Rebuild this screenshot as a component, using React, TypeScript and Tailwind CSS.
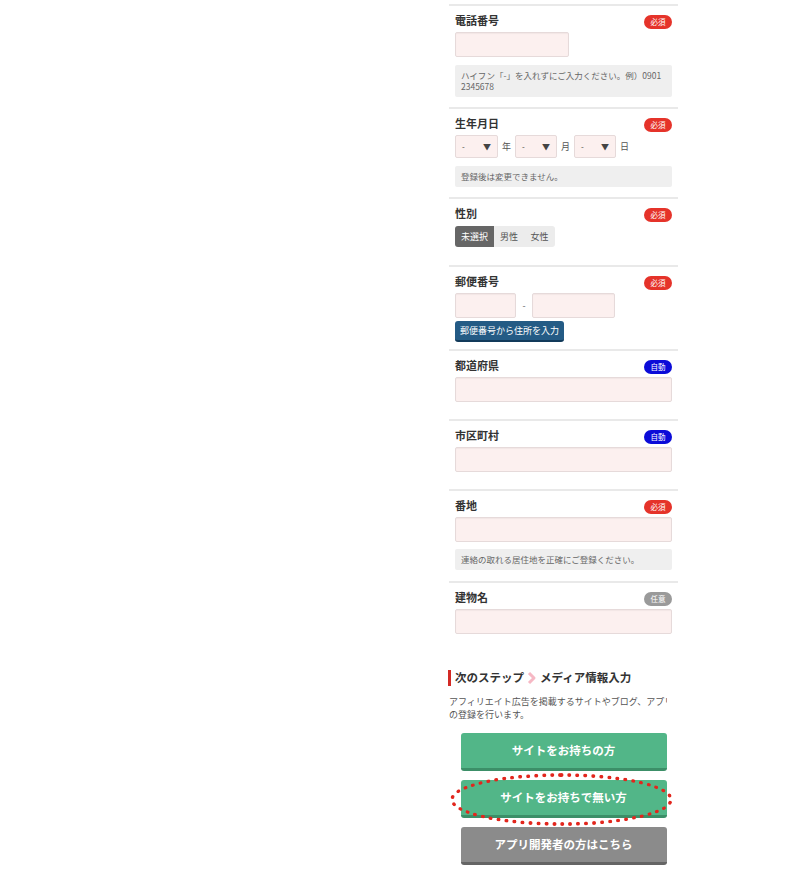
import React from "react";

const font = { fontFamily: '"Noto Sans CJK JP", "Noto Sans", sans-serif' };

const Sep = () => <div className="h-[2px] bg-[#e9e9e9]" />;

function Badge({ kind }: { kind: "req" | "auto" | "opt" }) {
  const cls =
    kind === "req"
      ? "bg-[#e5332a]"
      : kind === "auto"
      ? "bg-[#0b0bd8]"
      : "bg-[#9a9a9a]";
  const text = kind === "req" ? "必須" : kind === "auto" ? "自動" : "任意";
  return (
    <span
      className={`${cls} mt-[2px] flex h-[14px] w-[28px] items-center justify-center rounded-full text-[7.5px] leading-none text-white`}
    >
      {text}
    </span>
  );
}

function Header({ label, kind }: { label: string; kind: "req" | "auto" | "opt" }) {
  return (
    <div className="flex h-[19px] items-start justify-between">
      <span className="text-[11px] font-bold leading-[14px] text-[#333]">{label}</span>
      <Badge kind={kind} />
    </div>
  );
}

const inputCls =
  "h-[25px] rounded-[2px] border border-[#e6dada] bg-[#fcf0ef] shadow-[inset_0_1px_1px_rgba(0,0,0,0.04)]";

function Note({ children }: { children: React.ReactNode }) {
  return (
    <div className="rounded-[2px] bg-[#efefef] px-[6px] py-[5px] text-[8.5px] leading-[11px] text-[#666]">
      {children}
    </div>
  );
}

function Select({ w }: { w: string }) {
  return (
    <div
      className={`${w} flex h-[23px] items-center justify-between rounded-[2px] border border-[#e6dada] bg-[#fcf0ef] px-[6px] text-[8px] text-[#444]`}
    >
      <span>-</span>
      <span className="text-[8px]">▼</span>
    </div>
  );
}

export default function App() {
  return (
    <div className="min-h-[873px] w-[800px] bg-white pt-[4px]" style={font}>
      <div className="ml-[449px] w-[229px]">
        {/* 電話番号 */}
        <Sep />
        <div className="px-[6px] pb-[10px] pt-[7px]">
          <Header label="電話番号" kind="req" />
          <div className={`${inputCls} w-[114px]`} />
          <div className="mt-[8px]">
            <Note>
              ハイフン「-」を入れずにご入力ください。例）0901
              <br />
              2345678
            </Note>
          </div>
        </div>

        {/* 生年月日 */}
        <Sep />
        <div className="px-[6px] pb-[10px] pt-[7px]">
          <Header label="生年月日" kind="req" />
          <div className="flex items-center text-[9px] text-[#555]">
            <Select w="w-[43px]" />
            <span className="mx-[4px]">年</span>
            <Select w="w-[42px]" />
            <span className="mx-[4px]">月</span>
            <Select w="w-[42px]" />
            <span className="ml-[4px]">日</span>
          </div>
          <div className="mt-[8px]">
            <Note>登録後は変更できません。</Note>
          </div>
        </div>

        {/* 性別 */}
        <Sep />
        <div className="px-[6px] pb-[18px] pt-[7px]">
          <Header label="性別" kind="req" />
          <div className="mt-[1px] flex h-[21px] w-[100px] overflow-hidden rounded-[3px] bg-[#ececec] text-[9px]">
            <div className="flex w-[39px] items-center justify-center bg-[#666] text-white">未選択</div>
            <div className="flex w-[30px] items-center justify-center text-[#555]">男性</div>
            <div className="flex w-[31px] items-center justify-center text-[#555]">女性</div>
          </div>
        </div>

        {/* 郵便番号 */}
        <Sep />
        <div className="px-[6px] pb-[7px] pt-[7px]">
          <Header label="郵便番号" kind="req" />
          <div className="flex items-center">
            <div className={`${inputCls} w-[61px]`} />
            <span className="w-[16px] text-center text-[9px] text-[#666]">-</span>
            <div className={`${inputCls} w-[83px]`} />
          </div>
          <div className="mt-[3px] flex h-[21px] w-[109px] items-center justify-center rounded-[3px] border-b-[2px] border-[#123a5a] bg-[#245b85] text-[9px] text-white">
            郵便番号から住所を入力
          </div>
        </div>

        {/* 都道府県 */}
        <Sep />
        <div className="px-[6px] pb-[17px] pt-[7px]">
          <Header label="都道府県" kind="auto" />
          <div className={`${inputCls} w-full`} />
        </div>

        {/* 市区町村 */}
        <Sep />
        <div className="px-[6px] pb-[17px] pt-[7px]">
          <Header label="市区町村" kind="auto" />
          <div className={`${inputCls} w-full`} />
        </div>

        {/* 番地 */}
        <Sep />
        <div className="px-[6px] pb-[11px] pt-[7px]">
          <Header label="番地" kind="req" />
          <div className={`${inputCls} w-full`} />
          <div className="mt-[7px]">
            <Note>連絡の取れる居住地を正確にご登録ください。</Note>
          </div>
        </div>

        {/* 建物名 */}
        <Sep />
        <div className="px-[6px] pt-[7px]">
          <Header label="建物名" kind="opt" />
          <div className={`${inputCls} w-full`} />
        </div>

        {/* 次のステップ */}
        <div className="-ml-px mt-[36px] flex h-[16px] items-center">
          <div className="h-[16px] w-[3px] bg-[#d32a25]" />
          <span className="ml-[4px] text-[11.5px] font-bold text-[#333]">次のステップ</span>
          <svg width="12" height="14" viewBox="0 0 12 14" className="mx-[2px]">
            <polyline points="3,2 8,7 3,12" fill="none" stroke="#f6b8c4" strokeWidth="3" strokeLinejoin="round" />
          </svg>
          <span className="text-[11.5px] font-bold text-[#333]">メディア情報入力</span>
        </div>
        <div className="mt-[9px] w-[218px] overflow-hidden text-[9px] leading-[13px] text-[#555]">
          <div className="whitespace-nowrap">アフィリエイト広告を掲載するサイトやブログ、アプリ</div>
          <div className="whitespace-nowrap">の登録を行います。</div>
        </div>

        <div className="mt-[12px] flex flex-col items-center gap-[9px]">
          <div className="flex h-[38px] w-[206px] items-center justify-center rounded-[3px] border-b-[3px] border-[#3c8f68] bg-[#52b688] text-[11.5px] font-bold text-white">
            サイトをお持ちの方
          </div>
          <div className="relative flex h-[38px] w-[206px] items-center justify-center rounded-[3px] border-b-[3px] border-[#3c8f68] bg-[#52b688] text-[11.5px] font-bold text-white">
            サイトをお持ちで無い方
            <div className="pointer-events-none absolute left-[-11px] top-[-7px] h-[53px] w-[223px] rounded-[50%] border-[4px] border-dotted border-[#e2261d]" />
          </div>
          <div className="flex h-[38px] w-[206px] items-center justify-center rounded-[3px] border-b-[3px] border-[#656565] bg-[#8b8b8b] text-[11.5px] font-bold text-white">
            アプリ開発者の方はこちら
          </div>
        </div>
      </div>
    </div>
  );
}
